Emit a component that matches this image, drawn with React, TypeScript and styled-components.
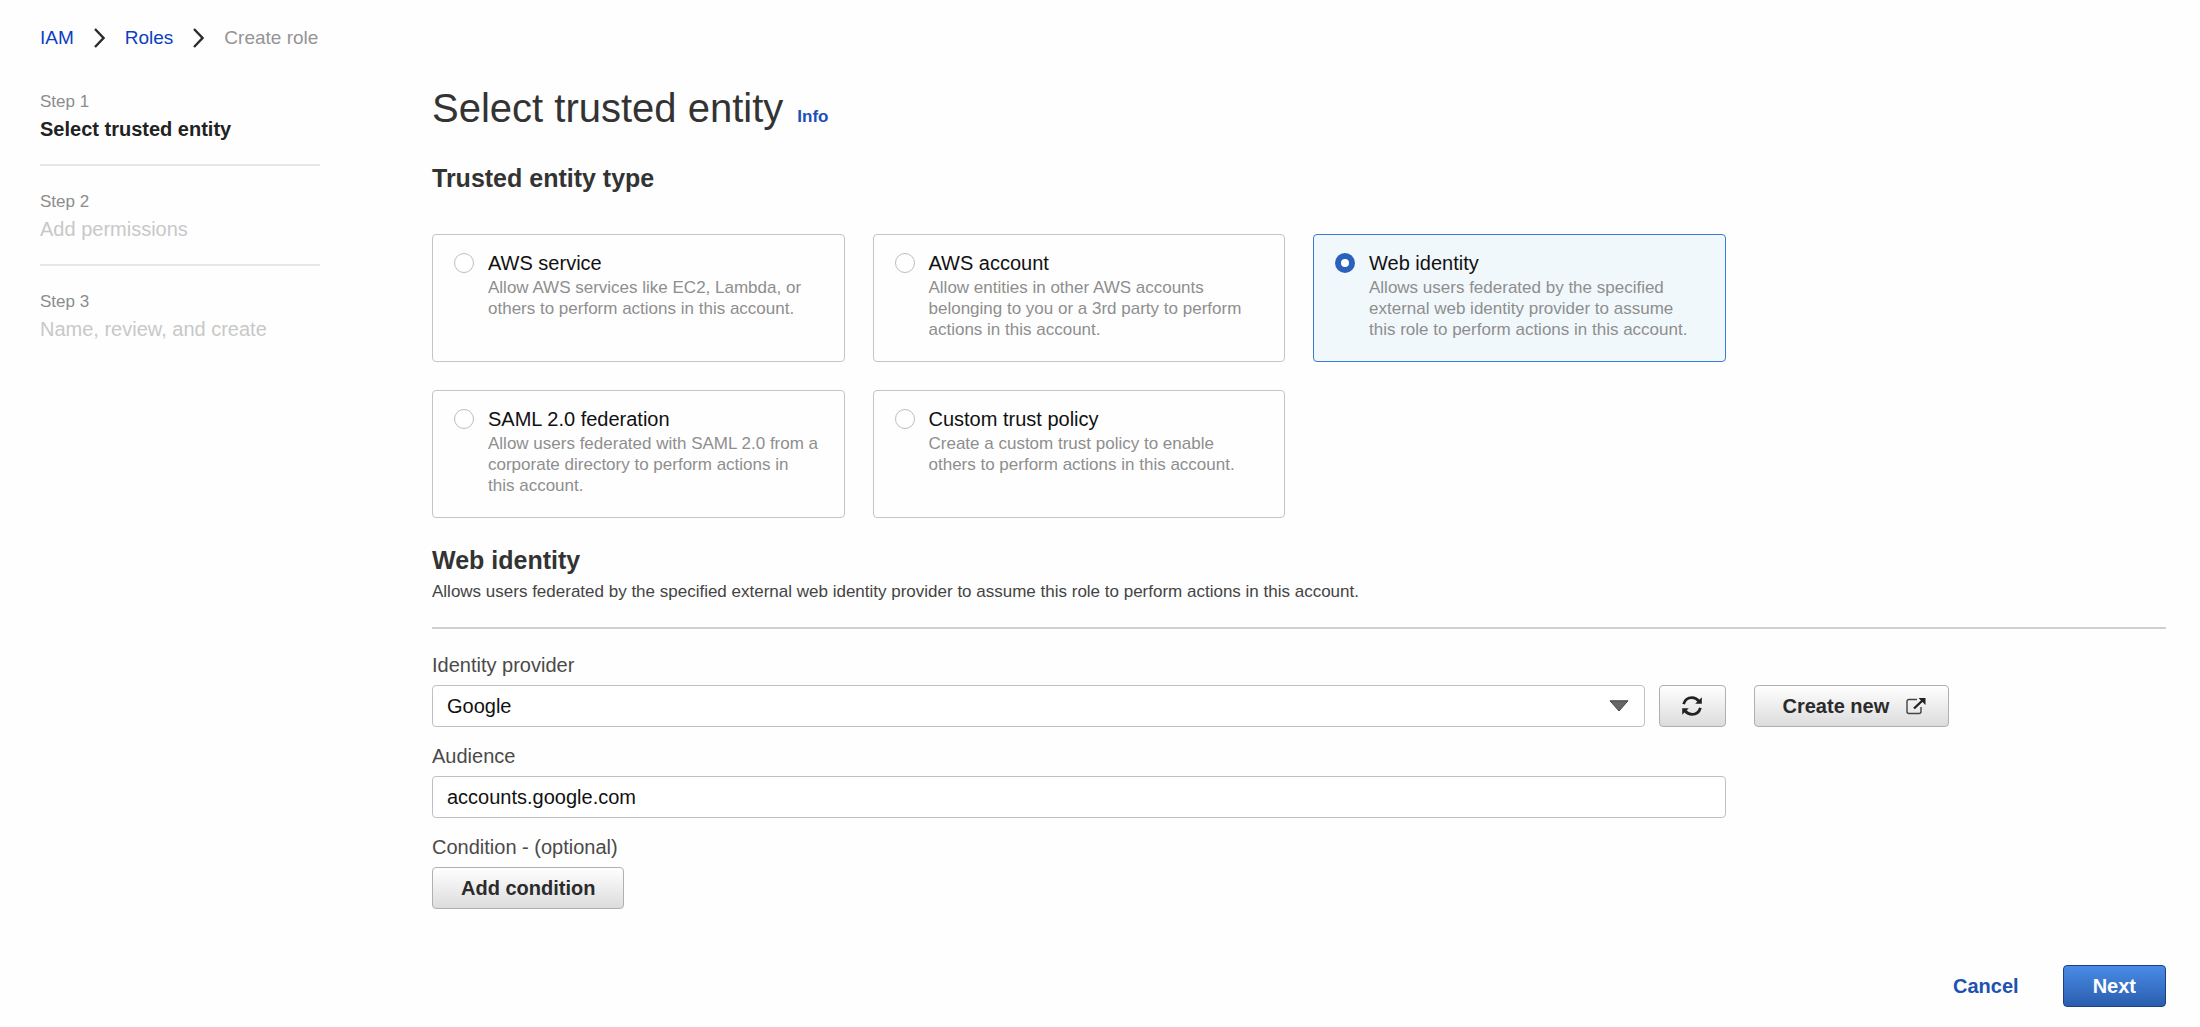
import React, { useState } from "react";
import styled, { createGlobalStyle } from "styled-components";

const GlobalStyle = createGlobalStyle`
  *, *::before, *::after { box-sizing: border-box; }
  body {
    margin: 0;
    background: #fefefe;
    color: #333;
    font-family: "Liberation Sans", "Helvetica Neue", Arial, sans-serif;
    font-size: 20px;
    line-height: 28px;
  }
  button, input, select { font: inherit; }
`;

const Page = styled.div`
  padding: 24px 34px 20px 40px;
`;

const Breadcrumbs = styled.nav`
  display: flex;
  align-items: center;
  gap: 20px;
  font-size: 19px;
  color: #949494;
  svg { display: block; }
`;

const Crumb = styled.a`
  color: #0a3fc0;
  text-decoration: none;
`;

const Layout = styled.div`
  display: grid;
  grid-template-columns: 280px minmax(0, 1fr);
  column-gap: 112px;
  margin-top: 34px;
`;

const Steps = styled.ol`
  margin: 0;
  padding: 3px 0 0;
  list-style: none;
`;

const Step = styled.li`
  height: 100px;
  &:not(:first-child)::before {
    content: "";
    display: block;
    height: 2px;
    margin-bottom: 23px;
    background: #e6e6e6;
  }
  &:first-child { height: 75px; }
`;

const StepNumber = styled.div`
  font-size: 17px;
  line-height: 26px;
  color: #8c8c8c;
`;

const StepName = styled.div<{ $current?: boolean }>`
  font-weight: ${(p) => (p.$current ? 700 : 400)};
  color: ${(p) => (p.$current ? "#222" : "#c8c8c8")};
`;

const TitleRow = styled.header`
  display: flex;
  align-items: baseline;
  gap: 14px;
`;

const Title = styled.h1`
  margin: 0;
  font-size: 40px;
  font-weight: 400;
  line-height: 44px;
`;

const InfoLink = styled.a`
  font-size: 17px;
  font-weight: 700;
  color: #1a4fb8;
  text-decoration: none;
`;

const Section = styled.section<{ $top: number }>`
  margin-top: ${(p) => p.$top}px;
`;

const Heading = styled.h2`
  margin: 0;
  font-size: 25px;
  line-height: 32px;
`;

const Columns = styled.div`
  display: grid;
  grid-template-columns: repeat(4, minmax(0, 1fr));
  column-gap: 28px;
`;

const WideCell = styled.div`
  grid-column: span 3;
`;

const Cards = styled.div`
  display: grid;
  grid-template-columns: repeat(3, minmax(0, 1fr));
  grid-auto-rows: 1fr;
  gap: 28px;
  margin-top: 40px;
`;

const Card = styled.label<{ $selected: boolean }>`
  display: flex;
  align-items: flex-start;
  gap: 14px;
  min-height: 128px;
  padding: 14px 24px 14px 21px;
  border: 1px solid ${(p) => (p.$selected ? "#3b7bd8" : "#c4c4c4")};
  border-radius: 4px;
  background: ${(p) => (p.$selected ? "#f1f8fc" : "#fefefe")};
`;

const Radio = styled.input`
  appearance: none;
  flex: none;
  width: 20px;
  height: 20px;
  margin: 4px 0 0;
  border: 1px solid #bdbdbd;
  border-radius: 50%;
  background: #fff;
  &:checked { border: 6px solid #2a62bb; }
`;

const CardTitle = styled.span`
  display: block;
  color: #111;
`;

const CardText = styled.span`
  display: block;
  font-size: 17px;
  line-height: 21px;
  color: #8e8e8e;
`;

const Description = styled.p`
  margin: 2px 0 0;
  font-size: 17px;
  color: #444;
`;

const Divider = styled.hr`
  height: 2px;
  margin: 21px 0 22px;
  border: 0;
  background: #cfcfcf;
`;

const Field = styled.div`
  & + & { margin-top: 15px; }
`;

const Label = styled.label`
  display: block;
  margin-bottom: 6px;
  color: #4a4a4a;
`;

const Controls = styled.div`
  display: flex;
  gap: 14px;
`;

const TextBox = styled.input`
  display: block;
  width: 100%;
  height: 42px;
  padding: 0 14px;
  border: 1px solid #c0c0c0;
  border-radius: 4px;
  background: #fff;
  color: #111;
`;

const SelectWrap = styled.div`
  position: relative;
  flex: 1;
  svg {
    position: absolute;
    top: 15px;
    right: 16px;
    pointer-events: none;
  }
`;

const Select = styled.select`
  appearance: none;
  display: block;
  width: 100%;
  height: 42px;
  padding: 0 14px;
  border: 1px solid #c0c0c0;
  border-radius: 4px;
  background: #fff;
  color: #111;
`;

const Button = styled.button`
  display: inline-flex;
  align-items: center;
  justify-content: center;
  height: 42px;
  padding: 0 28px;
  border: 1px solid #b0b0b0;
  border-radius: 4px;
  background: linear-gradient(#fff, #dcdcdc);
  color: #2b2b2b;
  font-weight: 700;
  white-space: nowrap;
`;

const IconButton = styled(Button)`
  width: 67px;
  padding: 0;
`;

const ExternalButton = styled(Button)`
  gap: 17px;
  padding-right: 22px;
`;

const PrimaryButton = styled(Button)`
  padding: 0 29px;
  border-color: #1d3f86;
  background: linear-gradient(#4a8be6, #2a5eae);
  color: #fff;
`;

const LinkButton = styled(Button)`
  padding: 0 29px;
  border-color: transparent;
  background: transparent;
  color: #1d52b0;
`;

const Side = styled.div`
  align-self: end;
  display: flex;
`;

const Footer = styled.footer`
  display: flex;
  justify-content: flex-end;
  gap: 14px;
  margin-top: 56px;
`;

const Chevron = () => (
  <svg width="11" height="20" viewBox="0 0 11 20" fill="none" stroke="#2b2b2b" strokeWidth="2.4" aria-hidden="true">
    <path d="M1 1l8.500 9L1 19" />
  </svg>
);

const Caret = () => (
  <svg width="20" height="12" viewBox="0 0 20 12" aria-hidden="true">
    <path d="M1 .8h18L10 11z" fill="#666" stroke="#444" strokeLinejoin="round" />
  </svg>
);

const RefreshIcon = () => (
  <svg width="20" height="20" viewBox="0 0 20 20" aria-hidden="true">
    <g fill="none" stroke="#222" strokeWidth="2.8">
      <path d="M1.600 8.200C2.800 3.900 6.200 1.700 10 1.700c2.800 0 5 1.200 6.800 3.300" />
      <path d="M18.400 11.800C17.200 16.100 13.800 18.300 10 18.300c-2.800 0-5-1.200-6.800-3.300" />
    </g>
    <path d="M19.800 1.200v6.600h-6.600z M.2 18.800v-6.600h6.600z" fill="#222" />
  </svg>
);

const ExternalIcon = () => (
  <svg width="20" height="18" viewBox="0 0 20 18" fill="none" aria-hidden="true">
    <path
      d="M11 2.500H3A2 2 0 0 0 1 4.500v10A2 2 0 0 0 3 16.500h10a2 2 0 0 0 2-2V10"
      stroke="#444"
      strokeWidth="1.4"
    />
    <path d="M8 11.500L17 3" stroke="#222" strokeWidth="2.4" />
    <path d="M12.500 1H19.500V8z" fill="#222" />
  </svg>
);

const steps = ["Select trusted entity", "Add permissions", "Name, review, and create"];

const entityTypes = [
  {
    title: "AWS service",
    text: "Allow AWS services like EC2, Lambda, or others to perform actions in this account.",
  },
  {
    title: "AWS account",
    text: "Allow entities in other AWS accounts belonging to you or a 3rd party to perform actions in this account.",
  },
  {
    title: "Web identity",
    text: "Allows users federated by the specified external web identity provider to assume this role to perform actions in this account.",
  },
  {
    title: "SAML 2.0 federation",
    text: "Allow users federated with SAML 2.0 from a corporate directory to perform actions in this account.",
  },
  {
    title: "Custom trust policy",
    text: "Create a custom trust policy to enable others to perform actions in this account.",
  },
];

export default function App() {
  const [entity, setEntity] = useState("Web identity");
  const [audience, setAudience] = useState("accounts.google.com");

  return (
    <>
      <GlobalStyle />
      <Page>
        <Breadcrumbs aria-label="Breadcrumbs">
          <Crumb href="#iam">IAM</Crumb>
          <Chevron />
          <Crumb href="#roles">Roles</Crumb>
          <Chevron />
          <span>Create role</span>
        </Breadcrumbs>
        <Layout>
          <Steps>
            {steps.map((name, i) => (
              <Step key={name}>
                <StepNumber>Step {i + 1}</StepNumber>
                <StepName $current={i === 0}>{name}</StepName>
              </Step>
            ))}
          </Steps>
          <main>
            <TitleRow>
              <Title>Select trusted entity</Title>
              <InfoLink href="#info">Info</InfoLink>
            </TitleRow>
            <Section $top={31}>
              <Heading id="entity-type">Trusted entity type</Heading>
              <Columns>
                <WideCell>
                  <Cards role="radiogroup" aria-labelledby="entity-type">
                    {entityTypes.map(({ title, text }) => (
                      <Card key={title} $selected={entity === title}>
                        <Radio
                          type="radio"
                          name="entity"
                          checked={entity === title}
                          onChange={() => setEntity(title)}
                        />
                        <span>
                          <CardTitle>{title}</CardTitle>
                          <CardText>{text}</CardText>
                        </span>
                      </Card>
                    ))}
                  </Cards>
                </WideCell>
              </Columns>
            </Section>
            <Section $top={26}>
              <Heading>Web identity</Heading>
              <Description>
                Allows users federated by the specified external web identity provider to assume this role to perform
                actions in this account.
              </Description>
              <Divider />
              <Field>
                <Columns>
                  <WideCell>
                    <Label htmlFor="provider">Identity provider</Label>
                    <Controls>
                      <SelectWrap>
                        <Select id="provider" defaultValue="Google">
                          <option>Google</option>
                        </Select>
                        <Caret />
                      </SelectWrap>
                      <IconButton type="button" aria-label="Refresh">
                        <RefreshIcon />
                      </IconButton>
                    </Controls>
                  </WideCell>
                  <Side>
                    <ExternalButton type="button">
                      Create new
                      <ExternalIcon />
                    </ExternalButton>
                  </Side>
                </Columns>
              </Field>
              <Field>
                <Columns>
                  <WideCell>
                    <Label htmlFor="audience">Audience</Label>
                    <TextBox id="audience" value={audience} onChange={(e) => setAudience(e.target.value)} />
                  </WideCell>
                </Columns>
              </Field>
              <Field>
                <Label htmlFor="condition">Condition - (optional)</Label>
                <Button id="condition" type="button">
                  Add condition
                </Button>
              </Field>
            </Section>
            <Footer>
              <LinkButton type="button">Cancel</LinkButton>
              <PrimaryButton type="button">Next</PrimaryButton>
            </Footer>
          </main>
        </Layout>
      </Page>
    </>
  );
}
